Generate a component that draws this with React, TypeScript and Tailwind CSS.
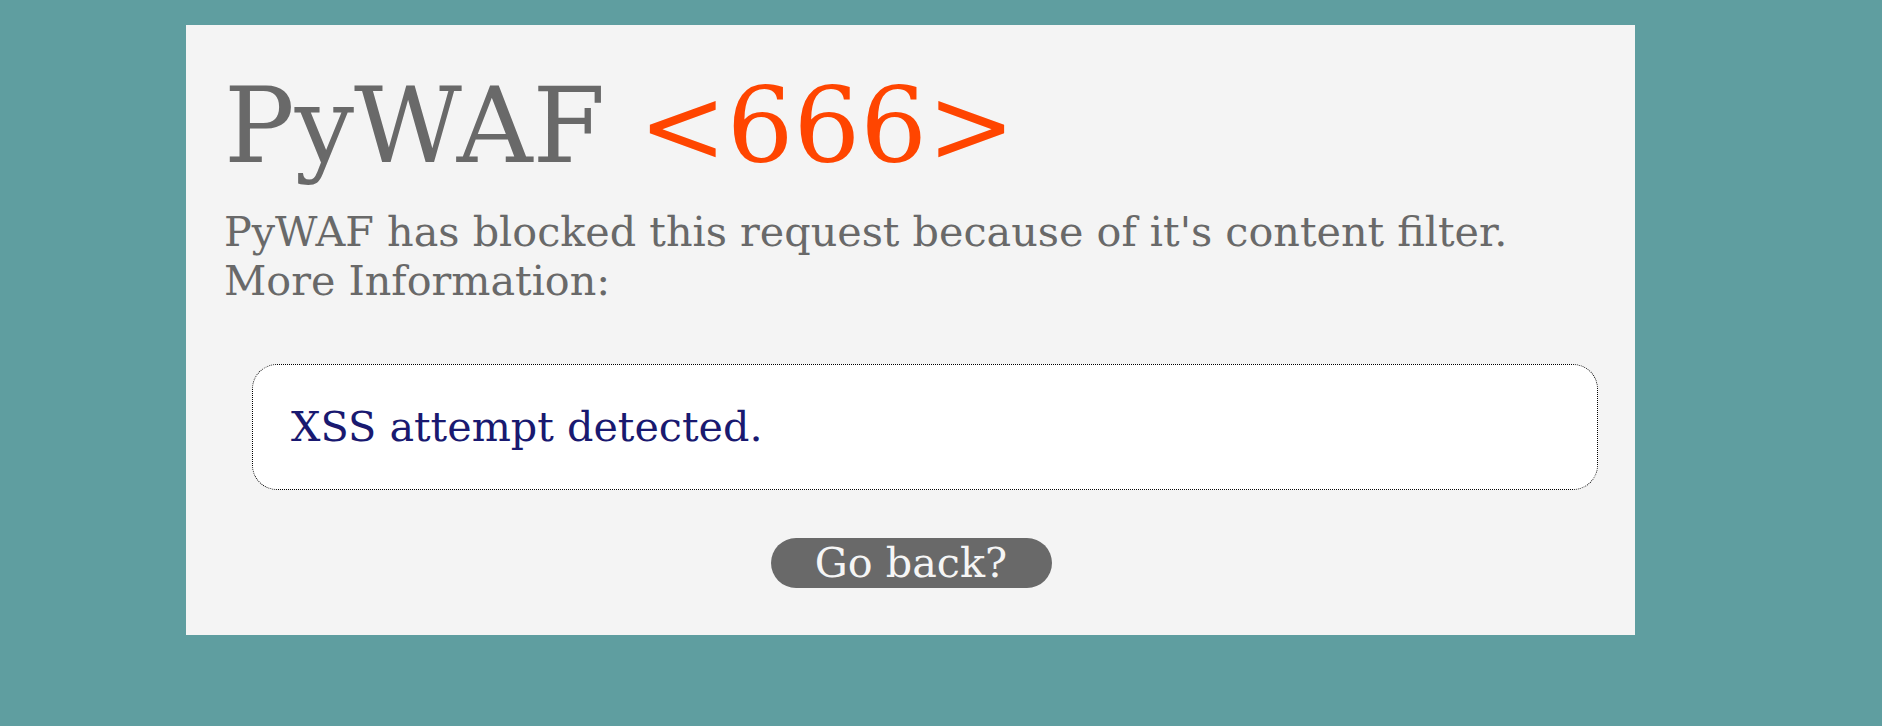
export default function App() {
  return (
    <div className="min-h-screen bg-[#5f9ea0] pt-[25px] font-['DejaVu_Serif',serif]">
      {/* Blocked request card */}
      <div className="ml-[186px] w-[1449px] h-[610px] bg-[#f4f4f4] pl-[38px] pr-[37px] pt-[40px]">
        <h1 className="text-[105px] leading-[1.164] text-[#696969]">
          PyWAF <span className="text-[#ff4500]">&lt;666&gt;</span>
        </h1>
        <p className="mt-[21px] text-[41.3px] leading-[49px] text-[#696969]">
          PyWAF has blocked this request because of it's content filter.
          <br />
          More Information:
        </p>
        <div className="mt-[58px] ml-[28px] rounded-[25px] border border-dotted border-black bg-white p-[38px] text-[41.3px] leading-[48px] text-[#191970]">
          XSS attempt detected.
        </div>
        <div className="mt-[48px] flex justify-center">
          <button className="h-[50px] w-[281px] rounded-full bg-[#696969] text-[41.3px] leading-[50px] text-[#f5f5f5]">
            Go back?
          </button>
        </div>
      </div>
    </div>
  )
}
